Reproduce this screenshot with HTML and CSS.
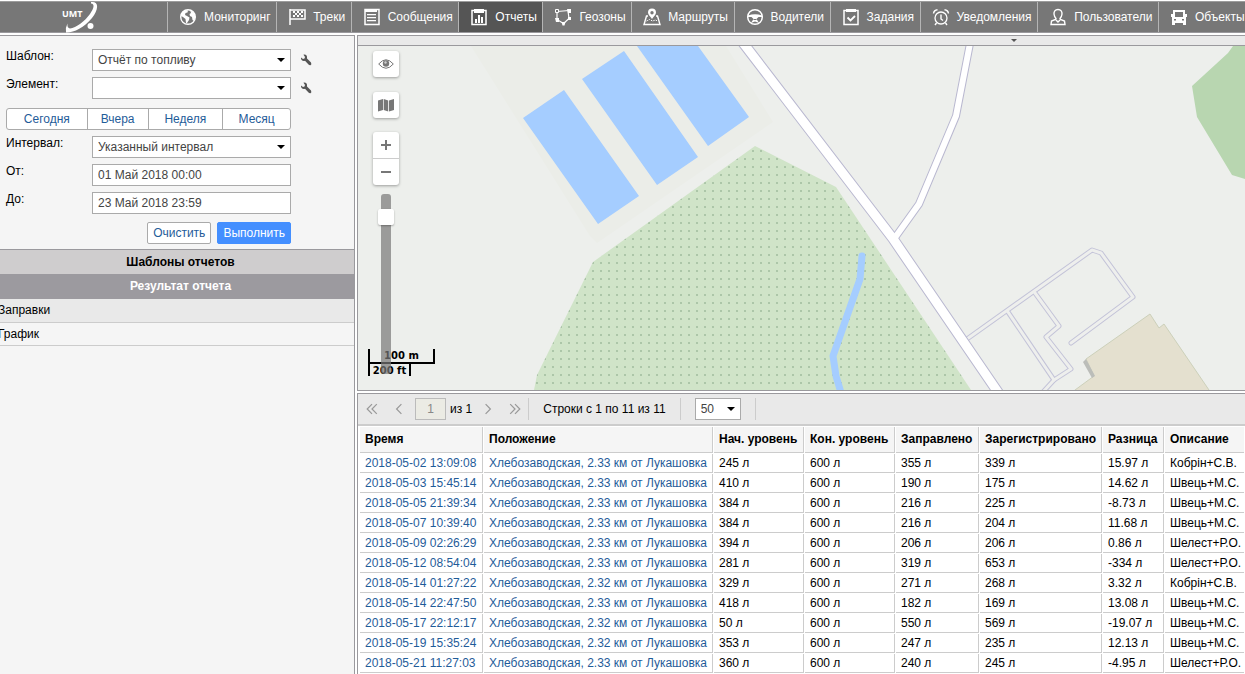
FILE: index.html
```html
<!DOCTYPE html>
<html lang="ru">
<head>
<meta charset="utf-8">
<title>UMT — Отчеты</title>
<link rel="stylesheet" href="styles.css">
</head>
<body>
<header class="topbar">
  <a class="logo" href="#" aria-label="UMT">
    <svg width="36" height="30" viewBox="0 0 36 30">
      <text class="logo-text" x="0" y="15">UMT</text>
      <path d="M29 0C37-1 37 7 30 16C22 26 11 31 4 30.500Q3 26 5.500 21.500Q5 26 8 26.500C14 26 23 19 28 12C32 6 33 2 29 1.500Z" fill="#fff"/>
      <circle cx="28.500" cy="24" r="3" fill="#fff"/>
    </svg>
  </a>
  <nav class="menu">
    <a href="#"><svg viewBox="0 0 18 18"><circle cx="9" cy="9" r="7.300" fill="none" stroke="#fff" stroke-width="1.400"/><path fill="#fff" d="M3 4.500L6 2l3 .5-.5 2L6.500 5 6 7l2 1 2.500 1.500L10 12l-2 3H7l-.5-4L4 9 2 8zM11 2l4 3 1.500 4L15 13l-1.500-1-.5-3-2-1-.5-2 1.500-1z"/></svg>Мониторинг</a>
    <a href="#"><svg viewBox="0 0 18 18"><path d="M2 1v16M2 2h15v9H2" fill="none" stroke="#fff" stroke-width="1.500"/><path fill="#fff" d="M5 3h2v2H5zM9 3h2v2H9zM13 3h2v2h-2zM7 5h2v2H7zM11 5h2v2h-2zM5 7h2v2H5zM9 7h2v2H9zM13 7h2v2h-2z"/></svg>Треки</a>
    <a href="#"><svg viewBox="0 0 18 18"><path d="M2 1.500h14v15H2z" fill="none" stroke="#fff" stroke-width="1.500"/><path fill="#fff" d="M2 1h12v3H2zM4 6h9v1.300H4zM4 9h9v1.300H4zM4 12h9v1.300H4z"/></svg>Сообщения</a>
    <a href="#" class="active" aria-current="page"><svg viewBox="0 0 18 18"><path d="M2 2.500h14v14H2z" fill="none" stroke="#fff" stroke-width="1.500"/><path fill="#fff" d="M4 1h10v4H4zM5 11h2v4H5zM8 7h2v8H8zM11 9h2v6h-2z"/></svg>Отчеты</a>
    <a href="#"><svg viewBox="0 0 18 18"><path d="M3 3.500l12-1M3 3.500v8l6.500 4 5.500-5-1-7.500" fill="none" stroke="#fff" stroke-width="1.200"/><path d="M1.500 1.500h3v3h-3z" fill="#777" stroke="#fff"/><path fill="#fff" d="M13 1h4v4h-3zM1 10h4v4H2zM7.500 14h4l-1 3.500h-2zM14 9h3v3h-3z"/></svg>Геозоны</a>
    <a href="#"><svg viewBox="0 0 18 18"><path d="M5 8L3.500 8 1 16.500h16L14.500 8H13" fill="none" stroke="#fff" stroke-width="1.400"/><path d="M3.500 13l3-1.500 3 1.500 3-1 2 1" fill="none" stroke="#fff" stroke-dasharray="1.500 1"/><path fill="#fff" fill-rule="evenodd" d="M9 11C7 8 5 6.500 5 4.500a4 4 0 0 1 8 0C13 6.500 11 8 9 11zM9 3a1.700 1.700 0 1 0 0 3.400A1.700 1.700 0 0 0 9 3z"/></svg>Маршруты</a>
    <a href="#"><svg viewBox="0 0 18 18"><circle cx="9" cy="9" r="7.300" fill="none" stroke="#fff" stroke-width="1.500"/><path fill="#fff" d="M2 7.500q7-2.500 14 0V9h-3.500l-2 2 2.500 4-4-1.500L5 15l2.500-4-2-2H2z"/><path d="M7.500 11.500h3" stroke="#777"/></svg>Водители</a>
    <a href="#"><svg viewBox="0 0 18 18"><path d="M2 2.500h14v14H2z" fill="none" stroke="#fff" stroke-width="1.500"/><path fill="#fff" d="M4 1h10v3H4z"/><path d="M5.500 9.500l3 3L13 8" fill="none" stroke="#fff" stroke-width="1.800"/></svg>Задания</a>
    <a href="#"><svg viewBox="0 0 18 18"><circle cx="9" cy="10" r="6" fill="none" stroke="#fff" stroke-width="1.300"/><path d="M9 6.500V11l2 1.500M1.500 5.500Q2 2 5.500 1.700M12.500 1.700Q16 2 16.500 5.500M4.500 15L3 17M13.500 15l1.500 2" fill="none" stroke="#fff" stroke-width="1.400"/></svg>Уведомления</a>
    <a href="#"><svg viewBox="0 0 18 18"><path d="M9 1.500c-3 0-4.200 2-4 4.500.2 2 1 3.500 2 4.500l-.5 1L2.500 13 2 16.500h14L15.500 13l-4-1.500-.5-1c1-1 1.800-2.500 2-4.500.2-2.500-1-4.500-4-4.500zM7 12l2 2 2-2" fill="none" stroke="#fff" stroke-width="1.400"/></svg>Пользователи</a>
    <a href="#"><svg viewBox="0 0 18 18"><path fill="#fff" fill-rule="evenodd" d="M3 2h12v4h2v3h-1v8h-3v-2H5v2H2V9H1V6h2zM5 4v5h8V4zM4 11v1.500h2V11zM12 11v1.500h2V11z"/></svg>Объекты</a>
  </nav>
</header>

<main class="workspace">
  <aside class="sidebar">
    <form class="report-form">
      <div class="field">
        <label for="tpl">Шаблон:</label>
        <span class="select"><select id="tpl"><option>Отчёт по топливу</option></select></span>
        <button type="button" class="tool" aria-label="Настройки шаблона"><svg viewBox="0 0 12 12"><path d="M1 3.500L3 5l1.500-.5L5 3 3.500.7C6 .2 7.500 2 7 4.500L11 8.500Q12 10.500 10.500 11.200 9.500 11.500 8.500 10.500L5 6.700C3 7.500.6 6 1 3.500z" fill="#555"/></svg></button>
      </div>
      <div class="field">
        <label for="unit">Элемент:</label>
        <span class="select"><select id="unit"><option></option></select></span>
        <button type="button" class="tool" aria-label="Настройки элемента"><svg viewBox="0 0 12 12"><path d="M1 3.500L3 5l1.500-.5L5 3 3.500.7C6 .2 7.500 2 7 4.500L11 8.500Q12 10.500 10.500 11.200 9.500 11.500 8.500 10.500L5 6.700C3 7.500.6 6 1 3.500z" fill="#555"/></svg></button>
      </div>
      <div class="periods">
        <button type="button">Сегодня</button><button type="button">Вчера</button><button type="button">Неделя</button><button type="button">Месяц</button>
      </div>
      <div class="field">
        <label for="interval">Интервал:</label>
        <span class="select"><select id="interval"><option>Указанный интервал</option></select></span>
      </div>
      <div class="field">
        <label for="from">От:</label>
        <input id="from" type="text" value="01 Май 2018 00:00">
      </div>
      <div class="field">
        <label for="to">До:</label>
        <input id="to" type="text" value="23 Май 2018 23:59">
      </div>
      <div class="actions">
        <button type="button">Очистить</button>
        <button type="button" class="primary">Выполнить</button>
      </div>
    </form>
    <h2 class="section">Шаблоны отчетов</h2>
    <h2 class="section current">Результат отчета</h2>
    <ul class="results">
      <li class="selected"><a href="#">Заправки</a></li>
      <li><a href="#">График</a></li>
    </ul>
  </aside>

  <div class="content">
    <div class="splitter"><button type="button" aria-label="Свернуть"></button></div>
    <section class="map" aria-label="Карта">
      <svg class="map-canvas" viewBox="358 46 887 344" preserveAspectRatio="xMinYMin slice">
        <defs>
          <pattern id="dots" x="0" y="6" width="8" height="8" patternUnits="userSpaceOnUse">
            <rect width="8" height="8" fill="#d0e4c8"/>
            <rect width="2" height="2" fill="#acc6a8"/>
          </pattern>
        </defs>
        <path fill="#ebede8" d="M471 46L590 236 597 243 773 122 726 46z"/>
        <path fill="#a5cdff" d="M523 118L564 90 639 196 598 224zM582 79L624 51 698 157 657 185zM637 46H698L749 117 708 146z"/>
        <path fill="url(#dots)" d="M755 146L836 187 971 390H534L537 375 593 262z"/>
        <path fill="none" stroke="#a5cdff" stroke-width="7" stroke-linecap="round" stroke-linejoin="round" d="M862 256L860 279 847 316 833 356 836 376 842 396"/>
        <path fill="#b8d6b0" d="M1233 46L1228 53 1192 86 1197 117 1232 175 1245 179 1400 200V46z"/>
        <g fill="none" stroke="#c3c3d8" stroke-width="5" stroke-linejoin="round" stroke-linecap="round">
          <path d="M967 339L1092 250 1101 253 1133 297 1071 343"/>
          <path d="M1035 293L1059 326 1046 337 1071 369 1054 380 1043 392"/>
          <path d="M1008 312L1054 380"/>
        </g>
        <g fill="none" stroke="#eeefed" stroke-width="3" stroke-linejoin="round" stroke-linecap="round">
          <path d="M967 339L1092 250 1101 253 1133 297 1071 343"/>
          <path d="M1035 293L1059 326 1046 337 1071 369 1054 380 1043 392"/>
          <path d="M1008 312L1054 380"/>
        </g>
        <g fill="none" stroke="#b9b8d0">
          <path stroke-width="8" d="M972 30L969.500 46 956 116 919 204 894 239"/>
          <path stroke-width="11" d="M733 30L745.500 46 892.500 238 1006 404"/>
        </g>
        <g fill="none" stroke="#fff">
          <path stroke-width="6" d="M972 30L969.500 46 956 116 919 204 894 239"/>
          <path stroke-width="9" d="M733 30L745.500 46 892.500 238 1006 404"/>
        </g>
        <path fill="#e4e0cf" stroke="#ccd0ba" d="M1075 390L1094 376 1086 359 1150 314 1159 328 1164 324 1209 390 1230 420H1040z"/>
        <path fill="#bbbdb9" d="M1083 362L1086 359 1095 376 1092 378z"/>
      </svg>
      <div class="scale">
        <div class="scale-m">100 m</div>
        <div class="scale-ft">200 ft</div>
      </div>
      <div class="controls">
        <button type="button" class="ctl" aria-label="Видимость"><svg viewBox="0 0 16 16"><path d="M.7 8Q8-.5 15.300 8 8 16.500.7 8z" fill="none" stroke="#777"/><circle cx="8" cy="7.500" r="3.200" fill="#777"/><circle cx="7.500" cy="6.500" r="1.200" fill="#ccc"/></svg></button>
        <button type="button" class="ctl" aria-label="Слои карты"><svg viewBox="0 0 16 16"><path fill="#777" d="M0 3.500l5-1.500v11l-5 1.500zM5.700 2l4.500 1.500v11l-4.500-1.500zM11 3.500L16 2v11l-5 1.500z"/></svg></button>
        <div class="zoom">
          <button type="button" aria-label="Приблизить"><svg viewBox="0 0 16 16"><path d="M3 8h10M8 3v10" stroke="#777" stroke-width="2"/></svg></button>
          <button type="button" aria-label="Отдалить"><svg viewBox="0 0 16 16"><path d="M3 8h10" stroke="#777" stroke-width="2"/></svg></button>
        </div>
        <input class="zoom-range" type="range" min="0" max="100" value="9" aria-label="Масштаб">
      </div>
    </section>

    <section class="report">
      <div class="pager">
        <button type="button" aria-label="Первая"><svg viewBox="0 0 10 10"><path d="M5 1L1 5l4 4M9 1L5 5l4 4"/></svg></button>
        <button type="button" aria-label="Предыдущая"><svg viewBox="0 0 10 10"><path d="M7 1L3 5l4 4"/></svg></button>
        <input type="text" value="1" aria-label="Страница" disabled>
        <span class="pages">из 1</span>
        <button type="button" aria-label="Следующая"><svg viewBox="0 0 10 10"><path d="M3 1l4 4-4 4"/></svg></button>
        <button type="button" aria-label="Последняя"><svg viewBox="0 0 10 10"><path d="M1 1l4 4-4 4M5 1l4 4-4 4"/></svg></button>
        <span class="range">Строки с 1 по 11 из 11</span>
        <span class="select small"><select aria-label="Строк на странице"><option>50</option></select></span>
        <span class="divider"></span>
      </div>
      <table class="grid">
        <colgroup><col class="c-time"><col class="c-place"><col class="c-level"><col class="c-level"><col class="c-filled"><col class="c-reg"><col class="c-diff"><col></colgroup>
        <thead><tr><th>Время</th><th>Положение</th><th>Нач. уровень</th><th>Кон. уровень</th><th>Заправлено</th><th>Зарегистрировано</th><th>Разница</th><th>Описание</th></tr></thead>
        <tbody>
          <tr><td><a href="#">2018-05-02 13:09:08</a></td><td><a href="#">Хлебозаводская, 2.33 км от Лукашовка</a></td><td>245 л</td><td>600 л</td><td>355 л</td><td>339 л</td><td>15.97 л</td><td>Кобрін+С.В.</td></tr>
          <tr><td><a href="#">2018-05-03 15:45:14</a></td><td><a href="#">Хлебозаводская, 2.33 км от Лукашовка</a></td><td>410 л</td><td>600 л</td><td>190 л</td><td>175 л</td><td>14.62 л</td><td>Швець+М.С.</td></tr>
          <tr><td><a href="#">2018-05-05 21:39:34</a></td><td><a href="#">Хлебозаводская, 2.33 км от Лукашовка</a></td><td>384 л</td><td>600 л</td><td>216 л</td><td>225 л</td><td>-8.73 л</td><td>Швець+М.С.</td></tr>
          <tr><td><a href="#">2018-05-07 10:39:40</a></td><td><a href="#">Хлебозаводская, 2.33 км от Лукашовка</a></td><td>384 л</td><td>600 л</td><td>216 л</td><td>204 л</td><td>11.68 л</td><td>Швець+М.С.</td></tr>
          <tr><td><a href="#">2018-05-09 02:26:29</a></td><td><a href="#">Хлебозаводская, 2.33 км от Лукашовка</a></td><td>394 л</td><td>600 л</td><td>206 л</td><td>206 л</td><td>0.86 л</td><td>Шелест+Р.О.</td></tr>
          <tr><td><a href="#">2018-05-12 08:54:04</a></td><td><a href="#">Хлебозаводская, 2.33 км от Лукашовка</a></td><td>281 л</td><td>600 л</td><td>319 л</td><td>653 л</td><td>-334 л</td><td>Шелест+Р.О.</td></tr>
          <tr><td><a href="#">2018-05-14 01:27:22</a></td><td><a href="#">Хлебозаводская, 2.32 км от Лукашовка</a></td><td>329 л</td><td>600 л</td><td>271 л</td><td>268 л</td><td>3.32 л</td><td>Кобрін+С.В.</td></tr>
          <tr><td><a href="#">2018-05-14 22:47:50</a></td><td><a href="#">Хлебозаводская, 2.33 км от Лукашовка</a></td><td>418 л</td><td>600 л</td><td>182 л</td><td>169 л</td><td>13.08 л</td><td>Швець+М.С.</td></tr>
          <tr><td><a href="#">2018-05-17 22:12:17</a></td><td><a href="#">Хлебозаводская, 2.32 км от Лукашовка</a></td><td>50 л</td><td>600 л</td><td>550 л</td><td>569 л</td><td>-19.07 л</td><td>Швець+М.С.</td></tr>
          <tr><td><a href="#">2018-05-19 15:35:24</a></td><td><a href="#">Хлебозаводская, 2.32 км от Лукашовка</a></td><td>353 л</td><td>600 л</td><td>247 л</td><td>235 л</td><td>12.13 л</td><td>Швець+М.С.</td></tr>
          <tr><td><a href="#">2018-05-21 11:27:03</a></td><td><a href="#">Хлебозаводская, 2.33 км от Лукашовка</a></td><td>360 л</td><td>600 л</td><td>240 л</td><td>245 л</td><td>-4.95 л</td><td>Шелест+Р.О.</td></tr>
        </tbody>
      </table>
    </section>
  </div>
</main>
</body>
</html>
```
FILE: styles.css
```css
* { box-sizing: border-box; }

body {
  margin: 0;
  height: 100vh;
  display: flex;
  flex-direction: column;
  gap: 2px;
  padding-top: 1px;
  overflow: hidden;
  background: #fff;
  color: #000;
  font: 12px/14px "Liberation Sans", Arial, sans-serif;
}

button, input, select { font: inherit; margin: 0; }
a { color: inherit; text-decoration: none; }

/* top bar */
.topbar {
  display: flex;
  height: 32px;
  flex: none;
  background: #777;
  border-top: 1px solid #9c9c9c;
  border-bottom: 1px solid #9a999d;
  color: #fff;
}
.logo {
  flex: none;
  width: 167px;
  display: flex;
  align-items: center;
  justify-content: center;
  padding-right: 8px;
}
.logo-text { font: bold 9px "Open Sans", sans-serif; fill: #fff; }
.logo svg { overflow: visible; }
.menu { flex: 1; display: flex; white-space: nowrap; }
.menu a {
  flex: 1 0 auto;
  display: flex;
  align-items: center;
  gap: 7px;
  padding: 0 5px 0 11px;
  border-left: 1px solid #b5b5b5;
}
.menu a:last-child { padding-right: 0; }
.menu svg { width: 18px; height: 18px; }
.menu .active { background: #555; }

/* layout */
.workspace { flex: 1; min-height: 0; display: flex; gap: 2px; }
.sidebar {
  width: 355px;
  flex: none;
  background: #f5f5f5;
  border-top: 1px solid #9a999d;
  border-right: 1px solid #9a999d;
}
.content { flex: 1; min-width: 0; display: flex; flex-direction: column; }

/* report form */
.report-form {
  display: flex;
  flex-direction: column;
  gap: 6px;
  padding: 13px 0 5px 6px;
  border-bottom: 1px solid #9a999d;
}
.field { display: flex; height: 22px; }
.field label { width: 86px; }
.field > input, .field .select { width: 199px; }
.field > input, select {
  height: 22px;
  padding: 0 5px;
  border: 1px solid #aaa;
  border-radius: 0;
  background: #fff;
  color: #444;
}
.select { position: relative; display: block; }
.select::after {
  content: "";
  position: absolute;
  right: 6px;
  top: 9px;
  border: 4px solid transparent;
  border-top-color: #000;
  border-bottom: 0;
  pointer-events: none;
}
select { width: 100%; appearance: none; display: block; }
.tool {
  display: flex;
  align-items: center;
  padding: 0;
  margin-left: 9px;
  border: 0;
  background: none;
}
.tool svg { width: 12px; height: 12px; }
.periods {
  display: grid;
  grid-template-columns: 80fr 61fr 75fr 68fr;
  width: 285px;
  height: 22px;
  margin-top: 3px;
  border: 1px solid #aaa;
  border-radius: 3px;
  background: #fff;
}
.periods button {
  padding: 0;
  border: 0;
  border-left: 1px solid #aaa;
  background: none;
  color: #1f5c99;
}
.periods button:first-child { border-left: 0; }
.actions {
  display: flex;
  justify-content: flex-end;
  gap: 6px;
  width: 285px;
  margin-top: 2px;
}
.actions button {
  height: 22px;
  padding: 0 5px;
  border: 1px solid #aaa;
  border-radius: 2px;
  background: #fff;
  color: #1f5c99;
}
.actions .primary { background: #448fff; border-color: #448fff; color: #fff; }

.section {
  margin: 0;
  padding-left: 7px;
  font-size: 12px;
  line-height: 24px;
  text-align: center;
  background: #cfcdce;
}
.section.current { line-height: 25px; background: #9c9a9f; color: #fff; }
.results { list-style: none; margin: 0; padding: 0; }
.results li {
  line-height: 22px;
  border-bottom: 1px solid #ccc;
  text-indent: -2px;
}
.results .selected { background: #e9e9e9; line-height: 23px; }

/* map */
.splitter {
  display: flex;
  justify-content: flex-end;
  height: 11px;
  padding-right: 228px;
  background: #e9e9e9;
  border: 1px solid #9a999d;
  border-right: 0;
}
.splitter button {
  align-self: center;
  width: 6px;
  height: 3px;
  padding: 0;
  border: 3px solid transparent;
  border-top-color: #555;
  border-bottom: 0;
  background: none;
}
.map {
  position: relative;
  flex: 1;
  min-height: 0;
  overflow: hidden;
  background: #edefec;
  border-left: 1px solid #9a999d;
  border-bottom: 1px solid #9a999d;
}
.map-canvas { position: absolute; inset: 0; width: 100%; height: 100%; }
.controls {
  position: absolute;
  left: 15px;
  top: 5px;
  display: flex;
  flex-direction: column;
  align-items: center;
}
.controls button {
  display: flex;
  align-items: center;
  justify-content: center;
  width: 26px;
  height: 26px;
  padding: 0;
  border: 0;
  background: none;
}
.controls svg { width: 16px; height: 16px; }
.controls .ctl, .zoom {
  background: #fff;
  border-radius: 3px;
  box-shadow: 0 1px 3px rgba(0, 0, 0, .35);
}
.controls .ctl { margin-bottom: 15px; }
.controls .ctl + .ctl { margin-bottom: 14px; }
.zoom { margin-bottom: 9px; }
.zoom button + button { height: 27px; border-top: 1px solid #ccc; }
.zoom-range {
  appearance: none;
  writing-mode: vertical-lr;
  width: 16px;
  height: 180px;
  background: none;
}
.zoom-range::-webkit-slider-runnable-track {
  width: 10px;
  height: 100%;
  border-radius: 3px;
  background: rgba(120, 120, 120, .7);
}
.zoom-range::-webkit-slider-thumb {
  appearance: none;
  width: 16px;
  height: 16px;
  margin-left: -3px;
  border-radius: 2px;
  background: #fff;
  box-shadow: 0 1px 2px rgba(0, 0, 0, .3);
}
.scale {
  position: absolute;
  left: 10px;
  bottom: 14px;
  font: bold 10px/13px "DejaVu Sans", Verdana, sans-serif;
  text-align: center;
}
.scale-m { width: 67px; height: 15px; border: 2px solid #000; border-top: 0; }
.scale-ft { width: 43px; height: 12px; border: 2px solid #000; border-width: 0 2px; white-space: nowrap; }

/* report */
.report {
  flex: none;
  margin-top: 2px;
  border-top: 1px solid #9a999d;
  border-left: 1px solid #9a999d;
  overflow: hidden;
}
.pager {
  display: flex;
  align-items: center;
  height: 32px;
  background: #e9e9e9;
  border-bottom: 2px solid #ccc;
  white-space: nowrap;
}
.pager button {
  display: flex;
  align-items: center;
  justify-content: center;
  width: 27px;
  height: 22px;
  padding: 0;
  border: 0;
  background: none;
}
.pager svg { width: 12px; height: 12px; fill: none; stroke: #999; }
.pager input {
  width: 31px;
  height: 22px;
  margin: 0 4px 0 3px;
  padding: 0;
  border: 1px solid #bbb;
  background: #ebebe4;
  color: #888;
  text-align: center;
}
.pages { margin-right: 2px; }
.range {
  line-height: 22px;
  padding: 0 14px;
  border: 1px solid #ccc;
  border-width: 0 1px;
}
.small { width: 46px; margin: 0 14px; }
.divider { height: 22px; border-left: 1px solid #ccc; }

.grid {
  table-layout: fixed;
  width: 100%;
  padding-left: 1px;
  border-collapse: separate;
  border-spacing: 1px;
  white-space: nowrap;
}
.c-time { width: 123px; }
.c-place { width: 229px; }
.c-level { width: 90px; }
.c-filled { width: 83px; }
.c-reg { width: 122px; }
.c-diff { width: 61px; }
.grid th, .grid td {
  padding: 0 0 0 5px;
  border: 1px solid #ccc;
  border-width: 0 1px 1px 0;
  text-align: left;
}
.grid th:last-child, .grid td:last-child { border-right: 0; }
.grid th { height: 26px; padding-bottom: 2px; background: #f5f5f5; }
.grid td { height: 19px; }
.grid td a { color: #1f5c99; }
```
